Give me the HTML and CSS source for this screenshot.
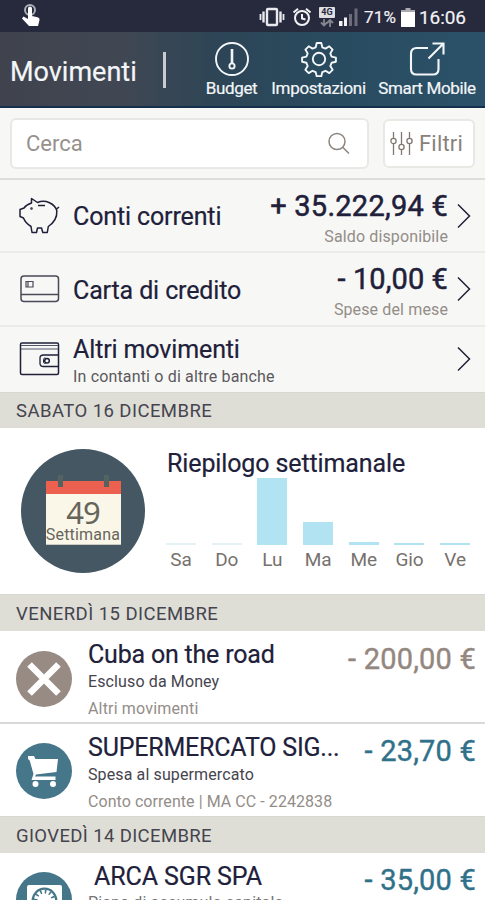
FILE: index.html
```html
<!DOCTYPE html>
<html lang="it">
<head>
<meta charset="utf-8">
<title>Movimenti</title>
<link rel="stylesheet" href="styles.css">
</head>
<body>
<div class="status">
  <svg class="touch" width="20" height="24" viewBox="0 0 20 24"><circle cx="9" cy="6" r="5" fill="none" stroke="#aeb0b8" stroke-width="2"/><path d="M7 4.500a2 2 0 0 1 4 0V12l5.500 1.200c1.500.4 2.300 1.400 2 2.800L17 22H8L1 14.500l1.500-2L7 15z" fill="#fff"/></svg>
  <div class="status-right">
    <svg class="vib" width="26" height="20" viewBox="0 0 26 20" fill="none" stroke="#e9e9ee"><rect x="8" y="2" width="10" height="16" rx="1" stroke-width="2.400"/><path d="M4.500 4.500v11M21.500 4.500v11" stroke-width="2.400"/><path d="M1.500 7v6M24.500 7v6" stroke-width="1.800"/></svg>
    <svg class="alarm" width="20" height="20" viewBox="0 0 20 20" fill="none" stroke="#f2f2f5" stroke-width="2"><circle cx="10" cy="11" r="7"/><path d="M10 7v4.500l3.500 1M1.500 5.500L6 1.800M18.500 5.500L14 1.800"/></svg>
    <div class="net"><span>4G</span><svg width="16" height="8" viewBox="0 0 16 8" fill="none" stroke="#85868f" stroke-width="1.800"><path d="M5 0v6M2 3.500l3 3 3-3M11 8V1M8 4l3-3 3 3"/></svg></div>
    <svg class="signal" width="20" height="20" viewBox="0 0 20 20"><path d="M0 14h3.500v5H0zM5 10.500h3v8.500H5z" fill="#f2f2f5"/><path d="M10 7h3v12h-3zM15.500 1.500h3V19h-3z" fill="#6c6d78"/></svg>
    <span class="pct">71%</span>
    <svg class="battery" width="14" height="20" viewBox="0 0 14 20"><path d="M4.500 0h5v2H14v3H0V2h4.500z" fill="#aaa9b0"/><path d="M0 4h14v15H0z" fill="#fff"/></svg>
    <span class="clock">16:06</span>
  </div>
</div>

<header class="header">
  <h1>Movimenti</h1>
  <i class="divider"></i>
  <nav>
    <a class="n1"><svg width="36" height="36" viewBox="0 0 36 36" fill="none" stroke="#f3f6f8" stroke-width="1.900"><circle cx="18" cy="18" r="16"/><path d="M18 8v14" stroke-width="2.600"/><circle cx="18" cy="25" r="2.600"/></svg><span>Budget</span></a>
    <a class="n2"><svg width="36" height="36" viewBox="0 0 36 36" fill="none" stroke="#f3f6f8" stroke-width="1.900" stroke-linejoin="round"><path d="M15.700 2h4.600l1 4.300 3.200 1.300 3.800-2.300 3.300 3.300-2.300 3.800 1.300 3.200 4.300 1v4.200l-4.300 1-1.300 3.200 2.300 3.800-3.300 3.300-3.800-2.300-3.200 1.300-1 4.200h-4.600l-1-4.200-3.200-1.300-3.800 2.300-3.300-3.300 2.300-3.800-1.300-3.200-4.300-1v-4.200l4.300-1 1.300-3.200-2.300-3.800 3.300-3.300 3.800 2.300 3.200-1.300z"/><circle cx="18" cy="18" r="6.200"/></svg><span>Impostazioni</span></a>
    <a class="n3"><svg width="36" height="36" viewBox="0 0 36 36" fill="none" stroke="#f3f6f8" stroke-width="2.100"><path d="M19 7H7.500C4 7 2 9 2 12.500V28c0 3.500 2 5.500 5.500 5.500H24c3.500 0 5.500-2 5.500-5.500V18"/><path d="M19.500 17.500L34 3M23.500 2.500h11v11"/></svg><span>Smart Mobile</span></a>
  </nav>
</header>

<div class="search">
  <div class="field"><span>Cerca</span><svg width="24" height="24" viewBox="0 0 24 24" fill="none" stroke="#8d857f" stroke-width="1.500"><circle cx="10" cy="9.500" r="8"/><path d="M15.700 15.200L22 21.500"/></svg></div>
  <div class="filter"><svg width="23" height="26" viewBox="0 0 23 26" fill="none" stroke="#807770" stroke-width="1.300"><path d="M3.500 1v6M3.500 13v11M11.500 1v12M11.500 19v5M19.500 1v6M19.500 13v11"/><circle cx="3.500" cy="10" r="2.600"/><circle cx="11.500" cy="16" r="2.600"/><circle cx="19.500" cy="10" r="2.600"/></svg><span>Filtri</span></div>
</div>

<section class="accounts">
  <div class="acc">
    <svg class="ico" width="42" height="40" viewBox="0 0 42 40" fill="none" stroke="#20203a" stroke-width="1.500" stroke-linejoin="round"><path d="M12.500 2.500l6 4c3-1.200 8-1.500 12 .3 4 1.800 6.500 5 7.300 8 .5 7-3 12-8.500 15.700l-1 6h-4.500l-1.300-4.500h-4L17.500 36.500H13l-1-6C8 28 5.800 25.500 4.500 22L1 20.500v-7l4-1.500c1.500-2.200 4.300-4 7.500-5z"/><path d="M37 13.500l3-2.500M19 9.500h7" /><circle cx="12.500" cy="12.500" r=".5"/></svg>
    <div class="name"><b>Conti correnti</b></div>
    <div class="sum"><strong class="a1">+ 35.222,94 €</strong><small>Saldo disponibile</small></div>
    <svg class="chev" width="14" height="26" viewBox="0 0 14 26"><path d="M1 1.500L12.500 13 1 24.500" fill="none" stroke="#20203a" stroke-width="1.500"/></svg>
  </div>
  <div class="acc card">
    <svg class="ico" width="42" height="40" viewBox="0 0 42 40" fill="none" stroke="#4a4958" stroke-width="1.500"><rect x="2" y="7" width="37.500" height="25.500" rx="3"/><path d="M2 25.500h37.500" /><path d="M7 12.500h7v5.500H7zM9 12.500v5.500" stroke-width="1.200"/></svg>
    <div class="name"><b>Carta di credito</b></div>
    <div class="sum"><strong>- 10,00 €</strong><small>Spese del mese</small></div>
    <svg class="chev" width="14" height="26" viewBox="0 0 14 26"><path d="M1 1.500L12.500 13 1 24.500" fill="none" stroke="#20203a" stroke-width="1.500"/></svg>
  </div>
  <div class="acc other">
    <svg class="ico" width="42" height="40" viewBox="0 0 42 40" fill="none" stroke="#20203a" stroke-width="1.500"><rect x="1.500" y="3" width="38" height="31.500" rx="1.500"/><path d="M2 5.500h37M2 9h37" stroke="#55546a" stroke-width="1.200"/><path d="M39 15H24.500c-2.500 0-3.500 1-3.500 3v5.500c0 2 1 3 3.500 3H39" stroke-width="1.300"/><path d="M26.500 18c-1.500 0-2 .5-2 1.500v2.500c0 1 .5 1.500 2 1.500" stroke-width="1"/><circle cx="28" cy="20.800" r="2.300"/></svg>
    <div class="name"><b>Altri movimenti</b><em>In contanti o di altre banche</em></div>
    <svg class="chev" width="14" height="26" viewBox="0 0 14 26"><path d="M1 1.500L12.500 13 1 24.500" fill="none" stroke="#20203a" stroke-width="1.500"/></svg>
  </div>
</section>

<h2 class="day first">SABATO 16 DICEMBRE</h2>
<section class="week">
  <div class="badge">
    <div class="calendar">
      <div class="cal-top"><i></i><i></i></div>
      <span class="num">49</span><span class="lab">Settimana</span>
    </div>
  </div>
  <div class="chart">
    <h3>Riepilogo settimanale</h3>
    <div class="bars">
      <div class="col"><i class="faint" style="height:2px"></i><span>Sa</span></div>
      <div class="col"><i class="faint" style="height:2px"></i><span>Do</span></div>
      <div class="col"><i style="height:67px"></i><span>Lu</span></div>
      <div class="col"><i style="height:23px"></i><span>Ma</span></div>
      <div class="col"><i style="height:3px"></i><span>Me</span></div>
      <div class="col"><i style="height:2px"></i><span>Gio</span></div>
      <div class="col"><i style="height:2px"></i><span>Ve</span></div>
    </div>
  </div>
</section>

<h2 class="day">VENERDÌ 15 DICEMBRE</h2>
<article class="tx">
  <svg class="round" width="56" height="56" viewBox="0 0 56 56"><circle cx="28" cy="28" r="28" fill="#978b84"/><path d="M13.500 13.500l29 29M42.500 13.500l-29 29" stroke="#fff" stroke-width="6.500"/></svg>
  <div class="info"><b>Cuba on the road</b><em>Escluso da Money</em><small>Altri movimenti</small></div>
  <strong class="excluded">- 200,00 €</strong>
</article>
<article class="tx second">
  <svg class="round" width="56" height="56" viewBox="0 0 56 56"><circle cx="28" cy="28" r="28" fill="#457689"/><path d="M12 13h6l1.500 3H42L40.500 29 20 31.500l-1 2H39.500V37H15.500l2-6-3.800-13.500L12 16z" fill="#fff"/><circle cx="19.500" cy="41" r="3" fill="#fff"/><circle cx="37" cy="41" r="3" fill="#fff"/></svg>
  <div class="info"><b class="t2">SUPERMERCATO SIG...</b><em>Spesa al supermercato</em><small class="s2">Conto corrente | MA CC - 2242838</small></div>
  <strong>- 23,70 €</strong>
</article>
<h2 class="day third">GIOVEDÌ 14 DICEMBRE</h2>
<article class="tx last">
  <svg class="round" width="56" height="56" viewBox="0 0 56 56"><circle cx="28" cy="28" r="28" fill="#457689"/><rect x="11" y="13" width="35" height="34" rx="2" fill="#fff"/><circle cx="28.500" cy="28.500" r="11.800" fill="none" stroke="#457689" stroke-width="2.200"/><circle cx="28.500" cy="28.500" r="9" fill="none" stroke="#457689" stroke-width="4" stroke-dasharray="1.600 3.112"/></svg>
  <div class="info"><b class="t3">ARCA SGR SPA</b><em class="faded">Piano di accumulo capitale</em></div>
  <strong>- 35,00 €</strong>
</article>
</body>
</html>
```
FILE: styles.css
```css
* { box-sizing: border-box; }
html { overflow: hidden; }
body { margin: 0; width: 485px; height: 900px; overflow: hidden; background: #fff; font-family: Roboto, sans-serif; color: #20203a; }
svg { display: block; flex: none; }
h1, h2, h3 { margin: 0; font-weight: 400; }
b, strong, em, small { display: block; font-weight: 400; font-style: normal; white-space: nowrap; }

.status { height: 32px; background: #27293d; display: flex; justify-content: space-between; padding: 0 19px 0 21px; color: #f2f2f5; }
.touch { margin-top: 4px; }
.status-right { display: flex; align-items: flex-start; padding-top: 7px; }
.alarm { margin-left: 7px; }
.net { margin-left: 7px; width: 16px; }
.net span { display: block; height: 11px; border-radius: 1px; background: #dedee3; color: #27293d; font: 700 9px/11px Roboto, sans-serif; text-align: center; }
.net svg { margin-top: 1px; }
.signal { margin-left: 4px; }
.pct { margin-left: 5px; width: 37px; font-size: 17px; line-height: 21px; letter-spacing: .2px; -webkit-text-stroke: .2px; }
.battery { margin-top: 1px; }
.clock { margin-left: 4px; width: 47px; font-size: 19px; line-height: 21px; white-space: nowrap; letter-spacing: -.1px; -webkit-text-stroke: .2px; }

.header { height: 76px; display: flex; color: #f3f6f8; background: linear-gradient(90deg, #40434d 0, #404753 25%, #2d4556 45%, #294b60 70%, #2b5269 100%); border-bottom: 2px solid #14304d; }
.header h1 { width: 152px; padding-left: 10px; font-size: 27px; line-height: 80px; -webkit-text-stroke: .2px; }
.divider { width: 3px; height: 36px; margin: 20px 0 0 11px; background: #c9cbd2; }
.header nav { display: flex; padding-top: 9px; font-size: 17px; line-height: 21px; -webkit-text-stroke: .2px; white-space: nowrap; }
.header a { display: flex; flex-direction: column; align-items: center; }
.header a span { margin-top: 1px; }
.n1 { width: 53px; margin-left: 39px; letter-spacing: -.35px; }
.n2 { width: 95px; margin-left: 13px; letter-spacing: -.3px; }
.n3 { width: 98px; margin-left: 12px; letter-spacing: -.34px; }

.search { height: 72px; background: #f7f7f5; border-bottom: 2px solid #deded9; padding: 10px 10px 0; display: flex; gap: 14px; color: #88817b; font-size: 22px; }
.field, .filter { border: 2px solid #e8e8e4; border-radius: 6px; background: #fff; display: flex; }
.field { width: 359px; height: 51px; padding: 0 16px 0 14px; align-items: center; justify-content: space-between; color: #96918d; }
.filter { width: 92px; height: 49px; padding: 0 0 0 5px; margin-top: 1px; align-items: center; }
.filter span { margin-left: 6px; letter-spacing: .2px; }

.accounts { background: #f7f7f5; }
.acc { height: 73px; display: flex; border-bottom: 2px solid #ebebe8; padding: 0 14px 0 19px; }
.acc .ico { margin-top: 16px; }
.acc.card { height: 74px; }
.acc.other { height: 65px; border: 0; }
.acc.other .ico { margin-top: 13px; }
.name { flex: 1; padding: 23px 0 0 12px; }
.name b { font-size: 25px; line-height: 28px; letter-spacing: -.13px; -webkit-text-stroke: .2px; }
.name em { font-size: 16px; line-height: 26px; letter-spacing: .16px; color: #5b595d; }
.card .name { padding-top: 24px; }
.other .name { padding-top: 9px; }
.sum { text-align: right; padding-top: 9px; }
.sum strong { font-size: 29px; line-height: 34px; letter-spacing: .1px; -webkit-text-stroke: .5px; }
.sum .a1 { letter-spacing: .25px; }
.sum small { font-size: 16px; line-height: 27px; letter-spacing: .13px; color: #938d88; }
.acc .chev { margin: 23px 0 0 9px; }
.acc.other .chev { margin-top: 19px; }

.day { height: 37px; padding: 0 16px; background: #deded7; border-top: 1px solid #d8d8d3; font-size: 18.500px; line-height: 38px; letter-spacing: .44px; color: #45444e; }
.first { height: 36px; line-height: 37px; }
.third { letter-spacing: .37px; }

.week { height: 166px; display: flex; padding: 21px 0 0 21px; }
.badge { width: 124px; height: 124px; border-radius: 50%; background: #445762; display: flex; justify-content: center; padding-top: 32px; }
.calendar { width: 75px; height: 64px; background: #faf7e9; text-align: center; color: #66655b; border-bottom: 1px solid #cbcabe; }
.cal-top { height: 13px; background: #eb604f; display: flex; justify-content: space-between; padding: 0 12px; }
.cal-top i { width: 5px; height: 12px; margin-top: -6px; background: #54635f; }
.num { display: block; font: 31px/32px "Noto Sans", sans-serif; letter-spacing: -1px; margin-top: 2px; }
.lab { display: block; font-size: 16px; line-height: 15px; letter-spacing: .2px; margin-top: -1px; white-space: nowrap; }
.chart { padding-left: 22px; }
.chart h3 { font-size: 25px; line-height: 28px; letter-spacing: -.12px; -webkit-text-stroke: .2px; padding-top: 1px; }
.bars { display: flex; gap: 15.700px; height: 96px; margin-left: -1px; }
.col { width: 30px; display: flex; flex-direction: column; justify-content: flex-end; }
.col i { background: #b1e3f2; }
.col .faint { background: #e3f3f5; }
.col span { font-size: 19px; line-height: 29px; text-align: center; color: #77716d; height: 29px; letter-spacing: -.1px; }

.tx { height: 93px; display: flex; padding: 10px 9px 0 16px; border-bottom: 2px solid #d9d9d7; }
.tx .round { margin-top: 10px; }
.info { flex: 1; padding-left: 16px; }
.info b { font-size: 25px; line-height: 28px; letter-spacing: -.2px; -webkit-text-stroke: .2px; }
.info .t2 { letter-spacing: -.2px; }
.info .t3 { padding-left: 6px; letter-spacing: -.1px; }
.info em { font-size: 16px; line-height: 26px; letter-spacing: .12px; color: #45444e; }
.info small { font-size: 16px; line-height: 27px; letter-spacing: .17px; color: #938d88; }
.info .s2 { letter-spacing: .06px; }
.info .faded { color: #77757a; margin-top: -1px; }
.tx strong { font-size: 29px; line-height: 36px; letter-spacing: .2px; color: #30718a; -webkit-text-stroke: .4px; }
.tx .excluded { color: #938780; }
.second { border: 0; height: 92px; padding-top: 9px; }
.second .info { padding-top: 1px; }
.last { border: 0; height: 47px; overflow: hidden; }
.last strong { margin-top: -1px; }
.last .round { margin-top: 9px; }
```
